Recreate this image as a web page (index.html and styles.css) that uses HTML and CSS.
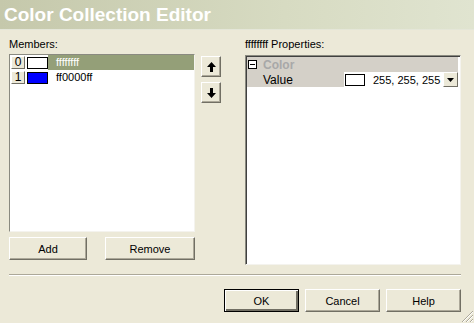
FILE: index.html
```html
<!DOCTYPE html>
<html lang="en">
<head>
  <meta charset="UTF-8" />
  <title>Color Collection Editor</title>
  <link rel="stylesheet" href="styles.css">
</head>
<body>
  <div class="window">
    <div class="titlebar">Color Collection Editor</div>

    <div class="panes">
      <!-- Members list -->
      <div class="members">
        <div class="caption">Members:</div>
        <div class="listbox">
          <div class="item selected">
            <span class="index">0</span>
            <span class="swatch" style="background:#ffffff"></span>
            <span class="name">ffffffff</span>
          </div>
          <div class="item">
            <span class="index">1</span>
            <span class="swatch" style="background:#0000ff"></span>
            <span class="name">ff0000ff</span>
          </div>
        </div>
        <div class="list-actions">
          <button class="btn btn-add">Add</button>
          <button class="btn btn-remove">Remove</button>
        </div>
      </div>

      <!-- Up / down -->
      <div class="order">
        <button class="btn arrow">
          <svg width="9" height="10" viewBox="0 0 9 10"><path d="M4.5 0 L9 5 L6 5 L6 10 L3 10 L3 5 L0 5 Z" fill="#000"/></svg>
        </button>
        <button class="btn arrow">
          <svg width="9" height="10" viewBox="0 0 9 10"><path d="M3 0 L6 0 L6 5 L9 5 L4.5 10 L0 5 L3 5 Z" fill="#000"/></svg>
        </button>
      </div>

      <!-- Property grid -->
      <div class="properties">
        <div class="caption">ffffffff Properties:</div>
        <div class="grid">
          <div class="category">
            <svg class="toggle" width="9" height="9" viewBox="0 0 9 9">
              <rect x="0.5" y="0.5" width="8" height="8" fill="#fff" stroke="#000"/>
              <path d="M2 4.5 H7" stroke="#000"/>
            </svg>
            <span class="cat-name">Color</span>
          </div>
          <div class="prop">
            <span class="prop-name">Value</span>
            <span class="prop-value">
              <span class="swatch wide" style="background:#ffffff"></span>
              <span class="value-text">255, 255, 255</span>
              <span class="drop">
                <svg width="7" height="4" viewBox="0 0 7 4"><path d="M0 0 H7 L3.5 4 Z" fill="#000"/></svg>
              </span>
            </span>
          </div>
        </div>
      </div>
    </div>

    <div class="separator"></div>

    <div class="footer">
      <button class="btn default">OK</button>
      <button class="btn">Cancel</button>
      <button class="btn">Help</button>
    </div>

    <svg class="grip" width="13" height="13" viewBox="0 0 13 13">
      <path d="M12 1 L1 12 M12 5 L5 12 M12 9 L9 12" stroke="#aca899" stroke-width="1"/>
      <path d="M12 2 L2 12 M12 6 L6 12 M12 10 L10 12" stroke="#fff" stroke-width="1"/>
    </svg>
  </div>
</body>
</html>
```

FILE: styles.css
```css
* {
  box-sizing: border-box;
  margin: 0;
  padding: 0;
}

html, body {
  width: 474px;
  height: 323px;
  overflow: hidden;
  font-family: 'Liberation Sans', Arial, sans-serif;
  font-size: 11px;
  color: #000;
}

body {
  background: #ece9d8;
}

.window {
  position: relative;
  width: 474px;
  height: 323px;
}

.titlebar {
  height: 30px;
  padding-left: 4px;
  line-height: 30px;
  font-size: 19px;
  font-weight: bold;
  color: #fff;
  background: linear-gradient(to right, #c5c8ab, #d7dbc2 60%, #e0e4d0);
  border-bottom: 1px solid #e4e6d8;
}

.panes {
  display: flex;
  padding: 7px 0 0 9px;
}

.caption {
  height: 14px;
  line-height: 14px;
  margin-bottom: 3px;
}

/* members */
.members {
  width: 186px;
}

.listbox {
  height: 178px;
  background: #fff;
  border: 1px solid;
  border-color: #8a8a80 #f4f3ee #f4f3ee #8a8a80;
}

.item {
  display: flex;
  align-items: center;
  height: 15px;
}

.index {
  width: 14px;
  height: 13px;
  margin-left: 1px;
  line-height: 11px;
  text-align: center;
  background: #ece9d8;
  border: 1px solid;
  border-color: #fff #716f64 #716f64 #fff;
  font-size: 12px;
}

.swatch {
  width: 21px;
  height: 12px;
  margin-left: 2px;
  border: 1px solid #000;
}

.name {
  flex: 1;
  height: 15px;
  line-height: 15px;
  padding-left: 8px;
}

.item.selected .name {
  background: #949f78;
  color: #fff;
}

.list-actions {
  display: flex;
  justify-content: space-between;
  margin-top: 5px;
}

.btn {
  height: 23px;
  background: #ece9d8;
  border: 1px solid;
  border-color: #fff #716f64 #716f64 #fff;
  box-shadow: inset -1px -1px 0 #aca899;
  font-family: inherit;
  font-size: 11px;
  color: #000;
}

.btn-add {
  width: 78px;
}

.btn-remove {
  width: 90px;
}

/* ordering */
.order {
  display: flex;
  flex-direction: column;
  gap: 5px;
  margin: 19px 0 0 6px;
}

.btn.arrow {
  width: 20px;
  height: 21px;
  display: flex;
  align-items: center;
  justify-content: center;
}

/* property grid */
.properties {
  width: 216px;
  margin-left: 24px;
}

.properties .caption {
  margin-bottom: 4px;
}

.grid {
  height: 210px;
  background: #fff;
  border: 1px solid;
  border-color: #8a8a80 #f4f3ee #f4f3ee #8a8a80;
  box-shadow: inset 1px 1px 0 #404040;
  padding: 1px 2px 0 1px;
}

.category,
.prop {
  display: flex;
  align-items: center;
  height: 15px;
  background: #d4d0c8;
}

.toggle {
  margin-left: 1px;
}

.cat-name {
  margin-left: 6px;
  font-weight: bold;
  font-size: 12px;
  color: #a8a8a8;
}

.prop-name {
  width: 97px;
  padding-left: 16px;
  font-size: 12px;
}

.prop-value {
  flex: 1;
  display: flex;
  align-items: center;
  height: 15px;
  background: #fff;
}

.swatch.wide {
  width: 20px;
  height: 12px;
  margin-left: 1px;
}

.value-text {
  flex: 1;
  margin-left: 8px;
  white-space: nowrap;
  font-size: 11px;
}

.drop {
  width: 15px;
  height: 15px;
  display: flex;
  align-items: center;
  justify-content: center;
  background: #ece9d8;
  border: 1px solid;
  border-color: #fff #716f64 #716f64 #fff;
}

.separator {
  width: 452px;
  margin: 9px 0 0 9px;
  border-top: 1px solid #aca899;
  border-bottom: 1px solid #fff;
}

.footer {
  display: flex;
  justify-content: flex-end;
  gap: 6px;
  margin-top: 13px;
  padding-right: 13px;
}

.footer .btn {
  width: 75px;
}

.btn.default {
  border: 1px solid #000;
  box-shadow: inset 1px 1px 0 #fff, inset -2px -2px 0 #716f64;
}

.grip {
  position: absolute;
  right: 0;
  bottom: 0;
}
```
